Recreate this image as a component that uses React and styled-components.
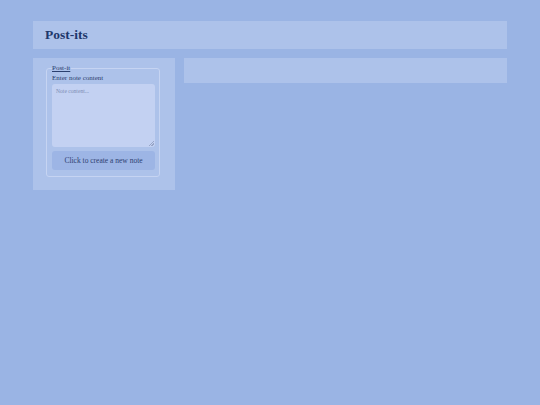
import React from 'react'
import styled, { createGlobalStyle } from 'styled-components'

const GlobalStyle = createGlobalStyle`
  html, body {
    margin: 0;
    padding: 0;
    background-color: #9ab4e4;
    font-family: "Liberation Serif", "Times New Roman", serif;
    color: #2b3f6e;
  }
`

const Page = styled.div`
  padding: 21px 33px;
  display: flex;
  flex-direction: column;
  gap: 9px;
`

const Header = styled.header`
  height: 28px;
  display: flex;
  align-items: center;
  padding-left: 12px;
  background-color: #adc2ea;
`

const Title = styled.h1`
  margin: 0;
  font-size: 13.5px;
  font-weight: bold;
  color: #1f386c;
`

const Row = styled.div`
  display: flex;
  align-items: flex-start;
  gap: 9px;
`

const Sidebar = styled.aside`
  width: 142px;
  box-sizing: border-box;
  padding: 4px 15px 13px 13px;
  background-color: #adc2ea;
`

const Fieldset = styled.fieldset`
  margin: 0;
  min-width: 0;
  padding: 0 4px 6px 5px;
  border: 1px solid #c6d4f2;
  border-radius: 3px;
`

const Legend = styled.legend`
  padding: 0 1px 0 0;
  font-size: 7px;
  line-height: 12px;
  text-decoration: underline;
`

const Label = styled.label`
  display: block;
  font-size: 7px;
  line-height: 9px;
  margin-bottom: 1px;
`

const TextArea = styled.textarea`
  display: block;
  width: 100%;
  height: 63px;
  box-sizing: border-box;
  padding: 4px;
  border: none;
  border-radius: 3px;
  background-color: #c3d1f2;
  font-family: "Liberation Serif", "Times New Roman", serif;
  font-size: 5.6px;
  color: #2b3f6e;
  outline: none;

  &::placeholder {
    color: #7d8db3;
  }

  &::-webkit-resizer {
    background: linear-gradient(
        135deg,
        transparent 42%,
        #98a6c8 42%,
        #98a6c8 56%,
        transparent 56%,
        transparent 70%,
        #98a6c8 70%,
        #98a6c8 84%,
        transparent 84%
      )
      no-repeat right 1px bottom 1px / 5px 5px;
  }
`

const CreateButton = styled.button`
  display: block;
  width: 100%;
  height: 19px;
  margin-top: 4px;
  padding: 0;
  border: none;
  border-radius: 3px;
  background-color: #9db5e5;
  font-family: "Liberation Serif", "Times New Roman", serif;
  font-size: 7.5px;
  color: #2e4170;
  cursor: pointer;
`

const Board = styled.section`
  flex: 1;
  height: 25px;
  background-color: #adc2ea;
`

const App = () => {
  return (
    <>
      <GlobalStyle />
      <Page>
        <Header>
          <Title>Post-its</Title>
        </Header>
        <Row>
          <Sidebar>
            <Fieldset>
              <Legend>Post-it</Legend>
              <Label htmlFor="note">Enter note content</Label>
              <TextArea id="note" placeholder="Note content..." />
              <CreateButton>Click to create a new note</CreateButton>
            </Fieldset>
          </Sidebar>
          <Board />
        </Row>
      </Page>
    </>
  )
}

export default App
